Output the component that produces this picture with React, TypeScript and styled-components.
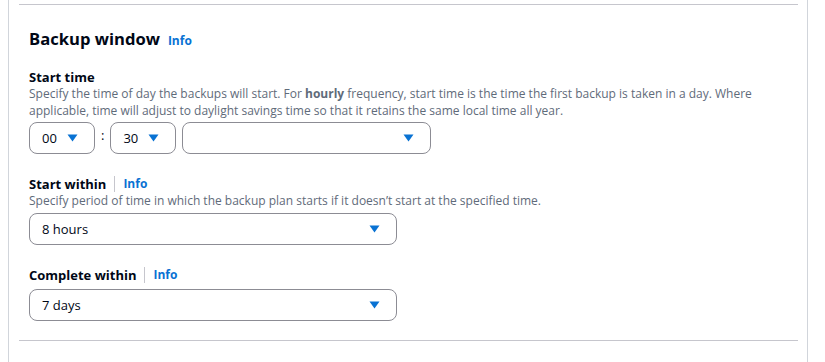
import React from "react";
import styled, { createGlobalStyle } from "styled-components";

const GlobalStyle = createGlobalStyle`
  html, body {
    margin: 0;
    padding: 0;
    background: #ffffff;
  }
  body {
    font-family: "Open Sans", "Noto Sans", Arial, sans-serif;
    color: #000716;
  }
`;

const Frame = styled.div`
  box-sizing: border-box;
  width: 800px;
  height: 362px;
  margin-left: 8px;
  border-left: 1px solid #d1d5db;
  border-right: 1px solid #d1d5db;
  padding: 4px 9px 0 10px;
`;

const Section = styled.section`
  border-top: 1px solid #c6c6cd;
  border-bottom: 1px solid #c6c6cd;
  padding: 22px 10px 19px 10px;
`;

const Heading = styled.h2`
  margin: 0 0 16px 0;
  font-size: 16.6px;
  font-weight: 700;
  line-height: 24px;
  display: flex;
  align-items: baseline;
  gap: 8px;
`;

const InfoLink = styled.a`
  color: #0972d3;
  font-size: 12px;
  font-weight: 700;
  text-decoration: none;
`;

const Field = styled.div`
  margin-bottom: 22px;
  &:last-child {
    margin-bottom: 0;
  }
`;

const Label = styled.div`
  display: flex;
  align-items: center;
  font-size: 13px;
  font-weight: 700;
  line-height: 16px;
`;

const Divider = styled.span`
  display: inline-block;
  width: 1px;
  height: 16px;
  background: #c6c6cd;
  margin: 0 8px 0 8px;
`;

const Description = styled.p`
  margin: 0;
  font-size: 12px;
  line-height: 17px;
  color: #5f6b7a;
`;

const Line = styled.span`
  display: block;
  white-space: nowrap;
`;

const Strong = styled.strong`
  font-weight: 700;
`;

const Control = styled.div<{ $gap: number }>`
  margin-top: ${(p) => p.$gap}px;
`;

const Row = styled.div`
  display: flex;
  align-items: center;
  gap: 6px;
`;

const Colon = styled.span`
  font-size: 13px;
  margin-top: -6px;
`;

const Select = styled.div<{ $w: number }>`
  box-sizing: border-box;
  width: ${(p) => p.$w}px;
  height: 32px;
  border: 1px solid #8c8c94;
  border-radius: 8px;
  display: flex;
  align-items: center;
  justify-content: space-between;
  padding: 0 16px 0 12px;
  font-size: 13px;
  color: #000716;
`;

const Arrow = () => (
  <svg width="11" height="8" viewBox="0 0 11 8">
    <path d="M0.5 0.5 L10.5 0.5 L5.5 7.5 Z" fill="#0972d3" />
  </svg>
);

const Dropdown = ({ w, value }: { w: number; value?: string }) => (
  <Select $w={w}>
    <span>{value}</span>
    <Arrow />
  </Select>
);

export default function App() {
  return (
    <>
      <GlobalStyle />
      <Frame>
        <Section>
          <Heading>
            Backup window <InfoLink href="#">Info</InfoLink>
          </Heading>

          <Field>
            <Label>Start time</Label>
            <Description>
              <Line>
                Specify the time of day the backups will start. For <Strong>hourly</Strong> frequency, start time
                is the time the first backup is taken in a day. Where
              </Line>
              <Line>applicable, time will adjust to daylight savings time so that it retains the same local time all year.</Line>
            </Description>
            <Control $gap={3}>
              <Row>
                <Dropdown w={66} value="00" />
                <Colon>:</Colon>
                <Dropdown w={66} value="30" />
                <Dropdown w={249} />
              </Row>
            </Control>
          </Field>

          <Field>
            <Label>
              Start within
              <Divider />
              <InfoLink href="#">Info</InfoLink>
            </Label>
            <Description>
              Specify period of time in which the backup plan starts if it doesn’t start at the specified time.
            </Description>
            <Control $gap={4}>
              <Dropdown w={368} value="8 hours" />
            </Control>
          </Field>

          <Field>
            <Label>
              Complete within
              <Divider />
              <InfoLink href="#">Info</InfoLink>
            </Label>
            <Control $gap={6}>
              <Dropdown w={368} value="7 days" />
            </Control>
          </Field>
        </Section>
      </Frame>
    </>
  );
}
